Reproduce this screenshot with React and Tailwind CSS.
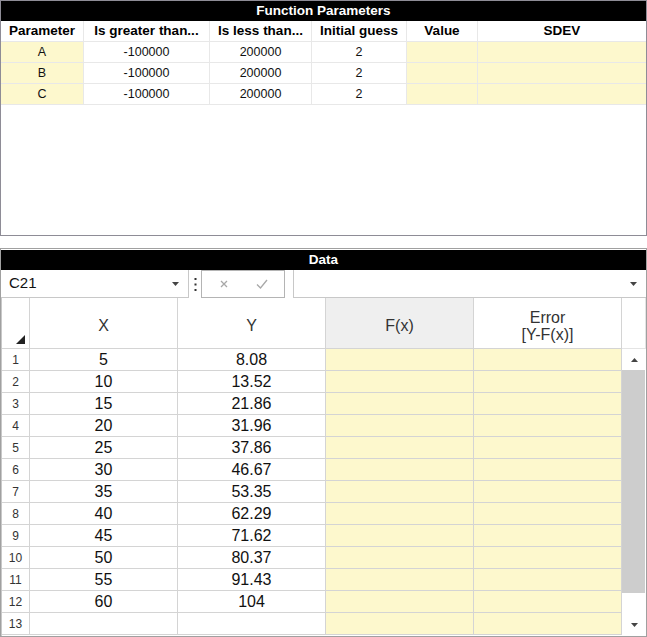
import React from 'react';

const params = [
  ['A', '-100000', '200000', '2'],
  ['B', '-100000', '200000', '2'],
  ['C', '-100000', '200000', '2'],
];

const rows = [
  ['5', '8.08'], ['10', '13.52'], ['15', '21.86'], ['20', '31.96'], ['25', '37.86'],
  ['30', '46.67'], ['35', '53.35'], ['40', '62.29'], ['45', '71.62'], ['50', '80.37'],
  ['55', '91.43'], ['60', '104'], ['', ''],
];

const Caret = ({ up }) => (
  <svg width="7" height="4" viewBox="0 0 7 4" className="block">
    <polygon points={up ? '0,4 7,4 3.5,0' : '0,0 7,0 3.5,4'} fill="#444" />
  </svg>
);

const FunctionParameters = () => {
  const cell = 'h-[21px] flex items-center justify-center border-r border-b border-[#e8e8e8]';
  const yellow = 'bg-[#fdf8cd]';
  return (
    <div className="h-[236px] border border-[#8e8c96] flex flex-col">
      <div className="h-[20px] bg-black text-white font-bold text-[13.5px] flex items-center justify-center">
        Function Parameters
      </div>
      <div className="grid grid-cols-[83px_126px_102px_95px_71px_1fr] text-[12.5px] text-[#111]">
        {['Parameter', 'Is greater than...', 'Is less than...', 'Initial guess', 'Value', 'SDEV'].map((h, i) => (
          <div key={h} className={`${cell} font-bold text-[13.5px] text-black ${i === 5 ? 'border-r-0' : ''}`}>{h}</div>
        ))}
        {params.map((p) => (
          <React.Fragment key={p[0]}>
            <div className={`${cell} ${yellow}`}>{p[0]}</div>
            <div className={cell}>{p[1]}</div>
            <div className={cell}>{p[2]}</div>
            <div className={cell}>{p[3]}</div>
            <div className={`${cell} ${yellow}`}></div>
            <div className={`${cell} ${yellow} border-r-0`}></div>
          </React.Fragment>
        ))}
      </div>
    </div>
  );
};

const FormulaBar = () => (
  <div className="h-[28px] flex bg-white">
    <div className="w-[188px] flex items-center justify-between pl-[8px] pr-[9px] border-r border-b border-[#c8c8c8] text-[15px] text-[#111]">
      <span>C21</span>
      <Caret />
    </div>
    <div className="w-[12px] flex items-center justify-center">
      <svg width="3" height="13" viewBox="0 0 3 13">
        <rect x="0.5" y="0" width="2" height="2" fill="#333" />
        <rect x="0.5" y="5.5" width="2" height="2" fill="#333" />
        <rect x="0.5" y="11" width="2" height="2" fill="#333" />
      </svg>
    </div>
    <div className="w-[84px] border border-[#b4b4b4] flex items-center justify-around pl-[4px] pr-[2px]">
      <svg width="8" height="8" viewBox="0 0 8 8">
        <path d="M1 1L7 7M7 1L1 7" stroke="#a8a8a8" strokeWidth="1.3" />
      </svg>
      <svg width="12" height="10" viewBox="0 0 12 10">
        <path d="M1 5.5L4.5 9L11 1" stroke="#a8a8a8" strokeWidth="1.3" fill="none" />
      </svg>
    </div>
    <div className="w-[8px]"></div>
    <div className="flex-1 border-l border-b border-[#c8c8c8] flex items-center justify-end pr-[9px]">
      <Caret />
    </div>
  </div>
);

const DataGrid = () => {
  const line = 'border-r border-b border-[#d4d4d4]';
  return (
    <div className="flex flex-1 border-l border-[#c8c8c8] bg-white">
      <div className="w-[620px] flex flex-col">
        <div className="h-[51px] flex text-[16px] text-[#333]">
          <div className={`w-[28px] ${line} flex items-end justify-end pr-[4px] pb-[4px]`}>
            <svg width="9" height="9" viewBox="0 0 9 9">
              <polygon points="9,0 9,9 0,9" fill="#222" />
            </svg>
          </div>
          <div className={`w-[148px] ${line} flex items-center justify-center pt-[5px]`}>X</div>
          <div className={`w-[148px] ${line} flex items-center justify-center pt-[5px]`}>Y</div>
          <div className={`w-[148px] ${line} bg-[#efefef] flex items-center justify-center pt-[5px]`}>F(x)</div>
          <div className={`w-[148px] ${line} flex flex-col items-center justify-center pt-[5px] leading-[17px]`}>
            <span>Error</span>
            <span>[Y-F(x)]</span>
          </div>
        </div>
        {rows.map((r, i) => (
          <div key={i} className="h-[22px] flex text-[16px] text-[#111]">
            <div className={`w-[28px] ${line} flex items-center justify-center text-[12px] text-[#333]`}>{i + 1}</div>
            <div className={`w-[148px] ${line} flex items-center justify-center`}>{r[0]}</div>
            <div className={`w-[148px] ${line} flex items-center justify-center`}>{r[1]}</div>
            <div className={`w-[148px] ${line} bg-[#fdf8cd]`}></div>
            <div className={`w-[148px] ${line} bg-[#fdf8cd]`}></div>
          </div>
        ))}
      </div>
      <div className="flex-1 flex flex-col">
        <div className="h-[51px] border-r border-b border-[#e4e4e4]"></div>
        <div className="h-[21px] flex items-center justify-center">
          <Caret up />
        </div>
        <div className="h-[223px] bg-[#cdcdcd] mr-[1px]"></div>
        <div className="flex-1"></div>
        <div className="h-[22px] flex items-center justify-center">
          <Caret />
        </div>
      </div>
    </div>
  );
};

export default function App() {
  return (
    <div className="w-[647px] h-[637px] bg-white flex flex-col font-['Liberation_Sans',Arial,sans-serif]">
      <FunctionParameters />
      <div className="mt-[12px] flex-1 border border-[#a0a0a0] pt-[1px] flex flex-col">
        <div className="h-[20px] bg-black text-white font-bold text-[13.5px] flex items-center justify-center">
          Data
        </div>
        <FormulaBar />
        <DataGrid />
      </div>
    </div>
  );
}
